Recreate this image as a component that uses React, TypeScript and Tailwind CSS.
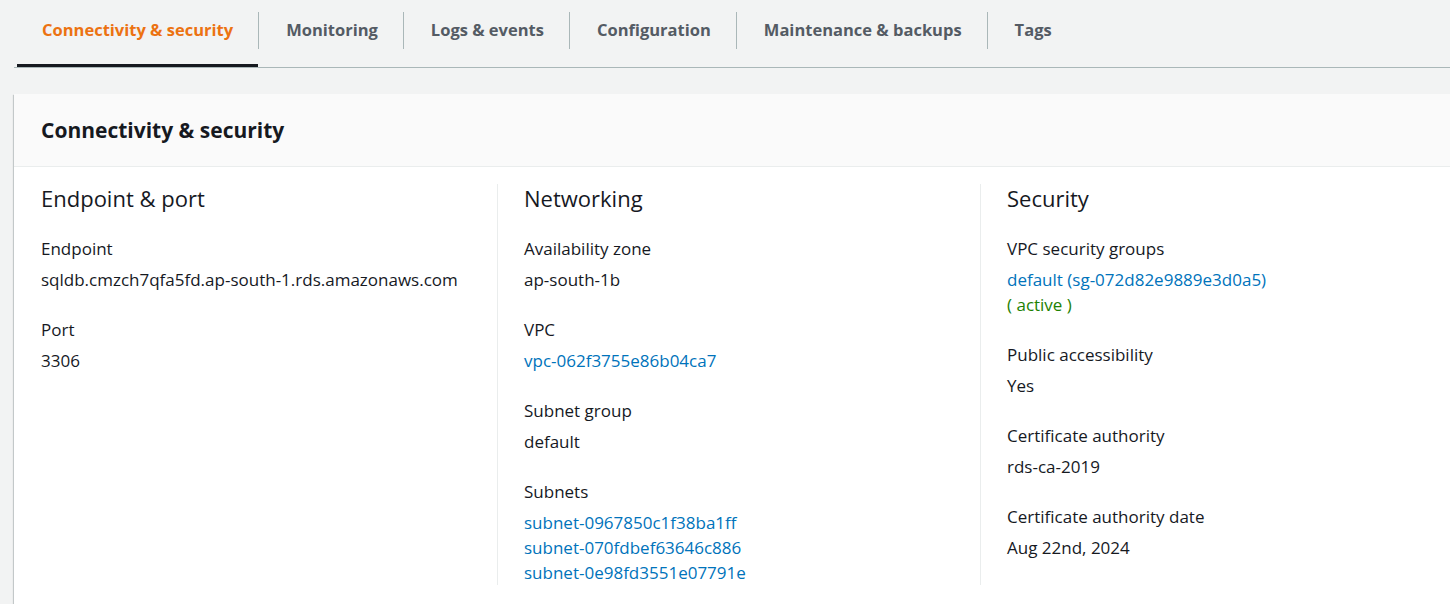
import React from 'react';

const tabs = [
  'Connectivity & security',
  'Monitoring',
  'Logs & events',
  'Configuration',
  'Maintenance & backups',
  'Tags',
];

type Item = { label: string; values: { text: string; kind?: 'link' | 'ok' }[] };

const columns: { title: string; items: Item[] }[] = [
  {
    title: 'Endpoint & port',
    items: [
      { label: 'Endpoint', values: [{ text: 'sqldb.cmzch7qfa5fd.ap-south-1.rds.amazonaws.com' }] },
      { label: 'Port', values: [{ text: '3306' }] },
    ],
  },
  {
    title: 'Networking',
    items: [
      { label: 'Availability zone', values: [{ text: 'ap-south-1b' }] },
      { label: 'VPC', values: [{ text: 'vpc-062f3755e86b04ca7', kind: 'link' }] },
      { label: 'Subnet group', values: [{ text: 'default' }] },
      {
        label: 'Subnets',
        values: [
          { text: 'subnet-0967850c1f38ba1ff', kind: 'link' },
          { text: 'subnet-070fdbef63646c886', kind: 'link' },
          { text: 'subnet-0e98fd3551e07791e', kind: 'link' },
        ],
      },
    ],
  },
  {
    title: 'Security',
    items: [
      {
        label: 'VPC security groups',
        values: [
          { text: 'default (sg-072d82e9889e3d0a5)', kind: 'link' },
          { text: '( active )', kind: 'ok' },
        ],
      },
      { label: 'Public accessibility', values: [{ text: 'Yes' }] },
      { label: 'Certificate authority', values: [{ text: 'rds-ca-2019' }] },
      { label: 'Certificate authority date', values: [{ text: 'Aug 22nd, 2024' }] },
    ],
  },
];

const valueColor = (kind?: 'link' | 'ok') =>
  kind === 'link' ? 'text-[#0073bb]' : kind === 'ok' ? 'text-[#1d8102]' : 'text-[#16191f]';

export default function App() {
  return (
    <div className="w-[1450px] h-[604px] overflow-hidden bg-[#f2f3f3] font-['Open_Sans',sans-serif] text-[#16191f]">
      {/* tabs */}
      <div className="ml-[14px] w-[1460px] flex border-b border-[#aab7b8] pl-[3px]">
        {tabs.map((t, i) => (
          <React.Fragment key={t}>
            {i > 0 && <div className="w-px h-[37px] mt-[12px] bg-[#aab7b8]" />}
            <div
              className={
                'h-[67px] pt-[18px] border-b-[3px] text-[16.5px] leading-[24px] font-bold whitespace-nowrap ' +
                (i === 0
                  ? 'px-[25px] border-[#16191f] text-[#ec7211]'
                  : 'pl-[27px] pr-[25px] border-transparent text-[#545b64]')
              }
            >
              {t}
            </div>
          </React.Fragment>
        ))}
      </div>

      {/* card */}
      <div className="ml-[14px] mt-[26px] w-[1460px] bg-white shadow-[0_1px_1px_0_rgba(0,28,36,0.3),1px_1px_1px_0_rgba(0,28,36,0.15),-1px_1px_1px_0_rgba(0,28,36,0.15)]">
        <div className="h-[73px] flex items-center px-[27px] bg-[#fafafa] border-b border-[#eaeded]">
          <h2 className="text-[21px] font-bold leading-[28px]">Connectivity &amp; security</h2>
        </div>
        <div className="grid grid-cols-[483px_483px_1fr] pt-[17px] pb-[40px]">
          {columns.map((col, i) => (
            <div key={col.title} className={i > 0 ? 'pl-[26px] border-l border-[#eaeded]' : 'pl-[27px]'}>
              <h3 className="text-[22px] leading-[28px] font-normal">{col.title}</h3>
              <div className="mt-[24px] flex flex-col gap-[25px] text-[17px] leading-[25px]">
                {col.items.map((it) => (
                  <div key={it.label}>
                    <div>{it.label}</div>
                    <div className="mt-[6px]">
                      {it.values.map((v) => (
                        <div key={v.text} className={valueColor(v.kind)}>
                          {v.text}
                        </div>
                      ))}
                    </div>
                  </div>
                ))}
              </div>
            </div>
          ))}
        </div>
      </div>
    </div>
  );
}
